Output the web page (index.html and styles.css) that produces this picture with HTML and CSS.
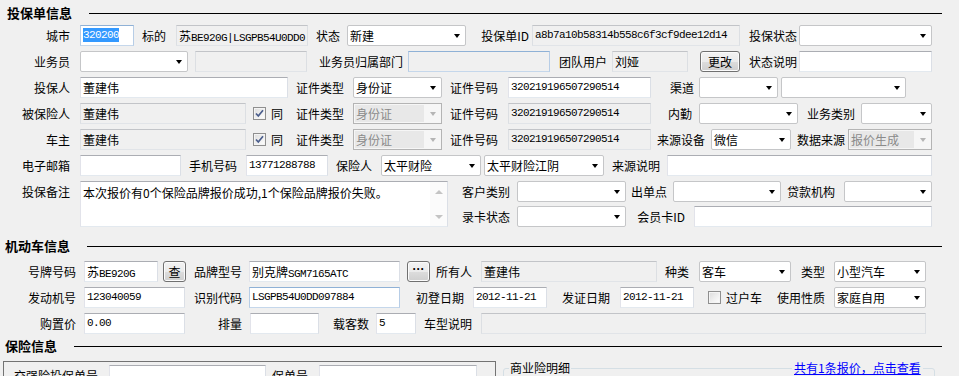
FILE: index.html
```html
<!DOCTYPE html>
<html lang="zh">
<head>
    <meta charset="UTF-8">
    <meta name="viewport" content="width=device-width, initial-scale=1.0">
    <title>投保单信息</title>
    <link rel="stylesheet" href="styles.css">
</head>
<body>
    <div class="sec first">投保单信息</div>

    <div class="row r1">
        <div class="lb">城市</div>
        <div class="tb focus en"><span class="hl">320200</span></div>
        <div class="lb">标的</div>
        <div class="tb ro en"><span class="zh">苏</span>BE920G|LSGPB54U0DD0</div>
        <div class="lb p7">状态</div>
        <div class="cb"><span class="v">新建</span></div>
        <div class="lb p3">投保单ID</div>
        <div class="tb ro en">a8b7a10b58314b558c6f3cf9dee12d14</div>
        <div class="lb p2">投保状态</div>
        <div class="cb"><span class="v"></span></div>
    </div>

    <div class="row r2">
        <div class="lb">业务员</div>
        <div class="cb"><span class="v"></span></div>
        <div></div>
        <div class="tb ro"></div>
        <div class="lb p5">业务员归属部门</div>
        <div class="tb ro focus"></div>
        <div class="lb p5">团队用户</div>
        <div class="tb ro">刘娅</div>
        <div></div>
        <div class="btn">更改</div>
        <div class="lb p2">状态说明</div>
        <div class="tb"></div>
    </div>

    <div class="row r3">
        <div class="lb">投保人</div>
        <div class="tb">董建伟</div>
        <div class="lb p9">证件类型</div>
        <div class="cb"><span class="v">身份证</span></div>
        <div class="lb">证件号码</div>
        <div class="tb en">320219196507290514</div>
        <div class="lb p5">渠道</div>
        <div class="cb"><span class="v"></span></div>
        <div></div>
        <div class="cb"><span class="v"></span></div>
    </div>

    <div class="row r4">
        <div class="lb">被保险人</div>
        <div class="tb ro">董建伟</div>
        <div class="chk"><span class="ck"><svg width="11" height="11" viewBox="0 0 11 11"><path d="M2 5.5 L4.3 8 L9 2.3" fill="none" stroke="#4a5d8c" stroke-width="1.7"/></svg></span>同</div>
        <div class="lb p9">证件类型</div>
        <div class="cb dis"><span class="v">身份证</span></div>
        <div class="lb">证件号码</div>
        <div class="tb ro en">320219196507290514</div>
        <div class="lb p7">内勤</div>
        <div class="cb"><span class="v"></span></div>
        <div class="lb p6">业务类别</div>
        <div class="cb"><span class="v"></span></div>
    </div>

    <div class="row r5">
        <div class="lb">车主</div>
        <div class="tb ro">董建伟</div>
        <div class="chk"><span class="ck"><svg width="11" height="11" viewBox="0 0 11 11"><path d="M2 5.5 L4.3 8 L9 2.3" fill="none" stroke="#4a5d8c" stroke-width="1.7"/></svg></span>同</div>
        <div class="lb p9">证件类型</div>
        <div class="cb dis"><span class="v">身份证</span></div>
        <div class="lb">证件号码</div>
        <div class="tb ro en">320219196507290514</div>
        <div class="lb p6">来源设备</div>
        <div class="cb"><span class="v">微信</span></div>
        <div class="lb p3">数据来源</div>
        <div class="cb dis"><span class="v">报价生成</span></div>
    </div>

    <div class="row r6">
        <div class="lb">电子邮箱</div>
        <div class="tb"></div>
        <div class="lb p9">手机号码</div>
        <div class="tb en">13771288788</div>
        <div class="lb p9">保险人</div>
        <div class="cb"><span class="v">太平财险</span></div>
        <div></div>
        <div class="cb"><span class="v">太平财险江阴</span></div>
        <div class="lb p7">来源说明</div>
        <div class="tb"></div>
    </div>

    <div class="memo-row">
        <div class="lb memo-lb">投保备注</div>
        <div class="memo">
            <div class="memo-txt">本次报价有0个保险品牌报价成功,1个保险品牌报价失败。</div>
            <div class="sb"><span class="up"></span><span class="down"></span></div>
        </div>
        <div class="memo-side">
            <div class="row r7a">
                <div class="lb p7">客户类别</div>
                <div class="cb"><span class="v"></span></div>
                <div class="lb p6">出单点</div>
                <div class="cb"><span class="v"></span></div>
                <div class="lb p9">贷款机构</div>
                <div class="cb"><span class="v"></span></div>
            </div>
            <div class="row r7b">
                <div class="lb p7">录卡状态</div>
                <div class="cb"><span class="v"></span></div>
                <div class="lb p9">会员卡ID</div>
                <div class="tb"></div>
            </div>
        </div>
    </div>

    <div class="sec second">机动车信息</div>

    <div class="row r9">
        <div class="lb p8">号牌号码</div>
        <div class="tb en"><span class="zh">苏</span>BE920G</div>
        <div></div>
        <div class="btn">查</div>
        <div class="lb p7">品牌型号</div>
        <div class="tb en"><span class="zh">别克牌</span>SGM7165ATC</div>
        <div></div>
        <div class="btn dots">···</div>
        <div class="lb p9">所有人</div>
        <div class="tb ro">董建伟</div>
        <div class="lb">种类</div>
        <div class="cb"><span class="v">客车</span></div>
        <div class="lb p9">类型</div>
        <div class="cb"><span class="v">小型汽车</span></div>
    </div>

    <div class="row r10">
        <div class="lb p8">发动机号</div>
        <div class="tb en">123040059</div>
        <div class="lb p7">识别代码</div>
        <div class="tb focus en">LSGPB54U0DD097884</div>
        <div class="lb p9">初登日期</div>
        <div class="tb en">2012-11-21</div>
        <div class="lb">发证日期</div>
        <div class="tb en">2012-11-21</div>
        <div class="chk wide"><span class="ck"></span>过户车</div>
        <div class="lb p9">使用性质</div>
        <div class="cb"><span class="v">家庭自用</span></div>
    </div>

    <div class="row r11">
        <div class="lb p8">购置价</div>
        <div class="tb en">0.00</div>
        <div class="lb p8">排量</div>
        <div class="tb"></div>
        <div class="lb p7">载客数</div>
        <div class="tb en">5</div>
        <div class="lb p9">车型说明</div>
        <div class="tb ro"></div>
    </div>

    <div class="sec third">保险信息</div>

    <div class="bottom">
        <div class="pnl">
            <div class="row rp">
                <div class="lb p11">交强险投保单号</div>
                <div class="tb"></div>
                <div class="lb p11">保单号</div>
                <div class="tb"></div>
            </div>
        </div>
        <div class="grp">
            <span class="grp-t">商业险明细</span>
            <a class="grp-link" href="#">共有1条报价，点击查看</a>
        </div>
    </div>
</body>
</html>
```

FILE: styles.css
```css
/* 页面整体 */
html, body {
    margin: 0;
    height: 376px;
    overflow: hidden;
}
body {
    background-color: #f0f0f0;
    font-family: "Noto Sans CJK SC", "Liberation Sans", sans-serif;
    font-size: 12px;
    color: #000;
    padding-top: 6px;
    box-sizing: border-box;
}

/* 分组标题 + 横线 */
.sec {
    display: flex;
    align-items: center;
    height: 14px;
    padding-left: 5px;
    font-size: 13px;
    font-weight: bold;
    line-height: 14px;
}
.sec::after {
    content: "";
    flex: 1;
    border-top: 1px solid #000;
    margin-left: 17px;
    margin-right: 17px;
}
.sec.first {
    padding-left: 7px;
    margin-bottom: 5px;
}
.sec.second {
    margin-top: 12px;
    margin-bottom: 8px;
}
.sec.third {
    margin-top: 3px;
    margin-bottom: 8px;
}

/* 每一行 */
.row {
    display: grid;
    height: 21px;
    margin-bottom: 5px;
}
.r1 { grid-template-columns: 80px 54px 42px 132px 39px 119px 66px 208px 59px 133px; }
.r2 { grid-template-columns: 80px 108px 7px 112px 101px 142px 62px 76px 12px 40px 59px 133px; }
.r3 { grid-template-columns: 80px 208px 65px 89px 66px 143px 48px 79px 3px 125px; }
.r4 { grid-template-columns: 80px 166px 42px 65px 89px 66px 143px 48px 99px 63px 71px; }
.r5 { grid-template-columns: 80px 166px 42px 65px 89px 66px 143px 60px 80px 57px 84px; }
.r6 { grid-template-columns: 80px 101px 65px 82px 53px 100px 3px 120px 63px 265px; }
.r7a { grid-template-columns: 69px 109px 47px 108px 63px 88px; margin-bottom: 4px; }
.r7b { grid-template-columns: 69px 109px 68px 238px; margin-bottom: 0; }
.r9 { grid-template-columns: 84px 74px 5px 23px 63px 151px 7px 23px 51px 176px 42px 92px 43px 92px; }
.r10 { grid-template-columns: 84px 101px 64px 151px 73px 74px 73px 74px 76px 64px 92px; }
.r11 { grid-template-columns: 84px 101px 65px 69px 57px 40px 65px 445px; }
.rp { grid-template-columns: 105px 157px 53px 158px; }

/* 标签 */
.lb {
    text-align: right;
    line-height: 21px;
    white-space: nowrap;
    padding-right: 10px;
}
.p2 { padding-right: 2px; }
.p3 { padding-right: 3px; }
.p5 { padding-right: 5px; }
.p6 { padding-right: 6px; }
.p7 { padding-right: 7px; }
.p8 { padding-right: 8px; }
.p9 { padding-right: 9px; }
.p11 { padding-right: 11px; }

/* 文本框 */
.tb {
    box-sizing: border-box;
    border: 1px solid;
    border-color: #abadb3 #dbdfe6 #e3e9ef #e2e3ea;
    background-color: #fff;
    padding-left: 2px;
    line-height: 19px;
    white-space: nowrap;
    overflow: hidden;
}
.tb.ro {
    background-color: #f0f0f0;
    border-color: #c2c4c8 #dcdfe3 #e1e4e8 #dcdfe3;
}
.tb.focus {
    border-color: #8fb1d6 #b7cde6 #c5d7eb #b7cde6;
}
.en {
    font-family: "Liberation Mono", "Noto Sans CJK SC", monospace;
    font-size: 11px;
    letter-spacing: -0.6px;
}
.zh {
    font-family: "Noto Sans CJK SC", sans-serif;
    font-size: 12px;
    letter-spacing: 0;
}
.hl {
    background-color: #3399ff;
    color: #fff;
    padding: 1px 0;
}

/* 下拉框 */
.cb {
    box-sizing: border-box;
    display: flex;
    align-items: center;
    border: 1px solid #c5c6c8;
    border-radius: 2px;
    background-color: #fff;
}
.cb .v {
    flex: 1;
    padding-left: 2px;
    line-height: 19px;
    white-space: nowrap;
    overflow: hidden;
}
.cb::after {
    content: "";
    width: 0;
    height: 0;
    border-left: 3.5px solid transparent;
    border-right: 3.5px solid transparent;
    border-top: 4px solid #000;
    margin: 1px 5px 0 4px;
}
.cb.dis {
    background-color: #f6f6f6;
    border-color: #b4b4b4;
    border-radius: 0;
}
.cb.dis .v {
    background-color: #e8e8e8;
    color: #8a8a8a;
    margin: 1px 0 1px 1px;
    padding-left: 1px;
    line-height: 17px;
}
.cb.dis::after {
    border-top-color: #b5b5b5;
    margin-left: 6px;
}

/* 按钮 */
.btn {
    box-sizing: border-box;
    border: 1px solid #707070;
    border-radius: 3px;
    background: linear-gradient(#f2f2f2 0%, #ebebeb 50%, #dddddd 51%, #cfcfcf 100%);
    box-shadow: inset 0 0 0 1px #fbfbfb;
    text-align: center;
    line-height: 19px;
}
.btn.dots {
    font-family: "Liberation Sans", sans-serif;
    font-weight: bold;
    line-height: 15px;
}

/* 复选框 */
.chk {
    display: flex;
    align-items: center;
    padding-left: 7px;
    white-space: nowrap;
}
.chk.wide {
    padding-left: 14px;
}
.ck {
    box-sizing: border-box;
    display: inline-flex;
    align-items: center;
    justify-content: center;
    width: 13px;
    height: 13px;
    border: 1px solid #8f8f8f;
    background: linear-gradient(135deg, #dcdcdc, #ffffff);
    box-shadow: inset 0 0 0 1px #f4f4f4;
    margin-right: 5px;
}

/* 投保备注 */
.memo-row {
    display: flex;
    height: 46px;
}
.memo-lb {
    box-sizing: border-box;
    width: 80px;
}
.memo {
    box-sizing: border-box;
    display: flex;
    width: 368px;
    border: 1px solid;
    border-color: #abadb3 #dbdfe6 #e3e9ef #e2e3ea;
    background-color: #fff;
}
.memo-txt {
    flex: 1;
    padding: 3px 2px 0;
    line-height: 15px;
    white-space: nowrap;
    overflow: hidden;
}
.sb {
    width: 17px;
    display: flex;
    flex-direction: column;
    justify-content: space-between;
    align-items: center;
    padding: 8px 0 7px;
    box-sizing: border-box;
    background-color: #fbfbfb;
}
.sb .up {
    width: 0;
    height: 0;
    border-left: 4px solid transparent;
    border-right: 4px solid transparent;
    border-bottom: 4px solid #c4c4c4;
}
.sb .down {
    width: 0;
    height: 0;
    border-left: 4px solid transparent;
    border-right: 4px solid transparent;
    border-top: 4px solid #c4c4c4;
}
.memo-side {
    display: flex;
    flex-direction: column;
}

/* 保险信息 */
.bottom {
    display: flex;
    align-items: flex-start;
    gap: 7px;
}
.pnl {
    box-sizing: border-box;
    margin-left: 3px;
    width: 493px;
    height: 80px;
    border: 1px solid #737373;
    padding-top: 3px;
}
.grp {
    position: relative;
    box-sizing: border-box;
    margin-top: 7px;
    width: 432px;
    height: 70px;
    border: 1px solid #d5dfe5;
    border-radius: 3px;
}
.grp-t {
    position: absolute;
    left: 5px;
    top: -8px;
    padding: 0 1px;
    background-color: #f0f0f0;
    line-height: 14px;
}
.grp-link {
    position: absolute;
    left: 288px;
    top: -8px;
    padding: 0 2px;
    background-color: #f0f0f0;
    color: #0000ff;
    line-height: 14px;
}
```
